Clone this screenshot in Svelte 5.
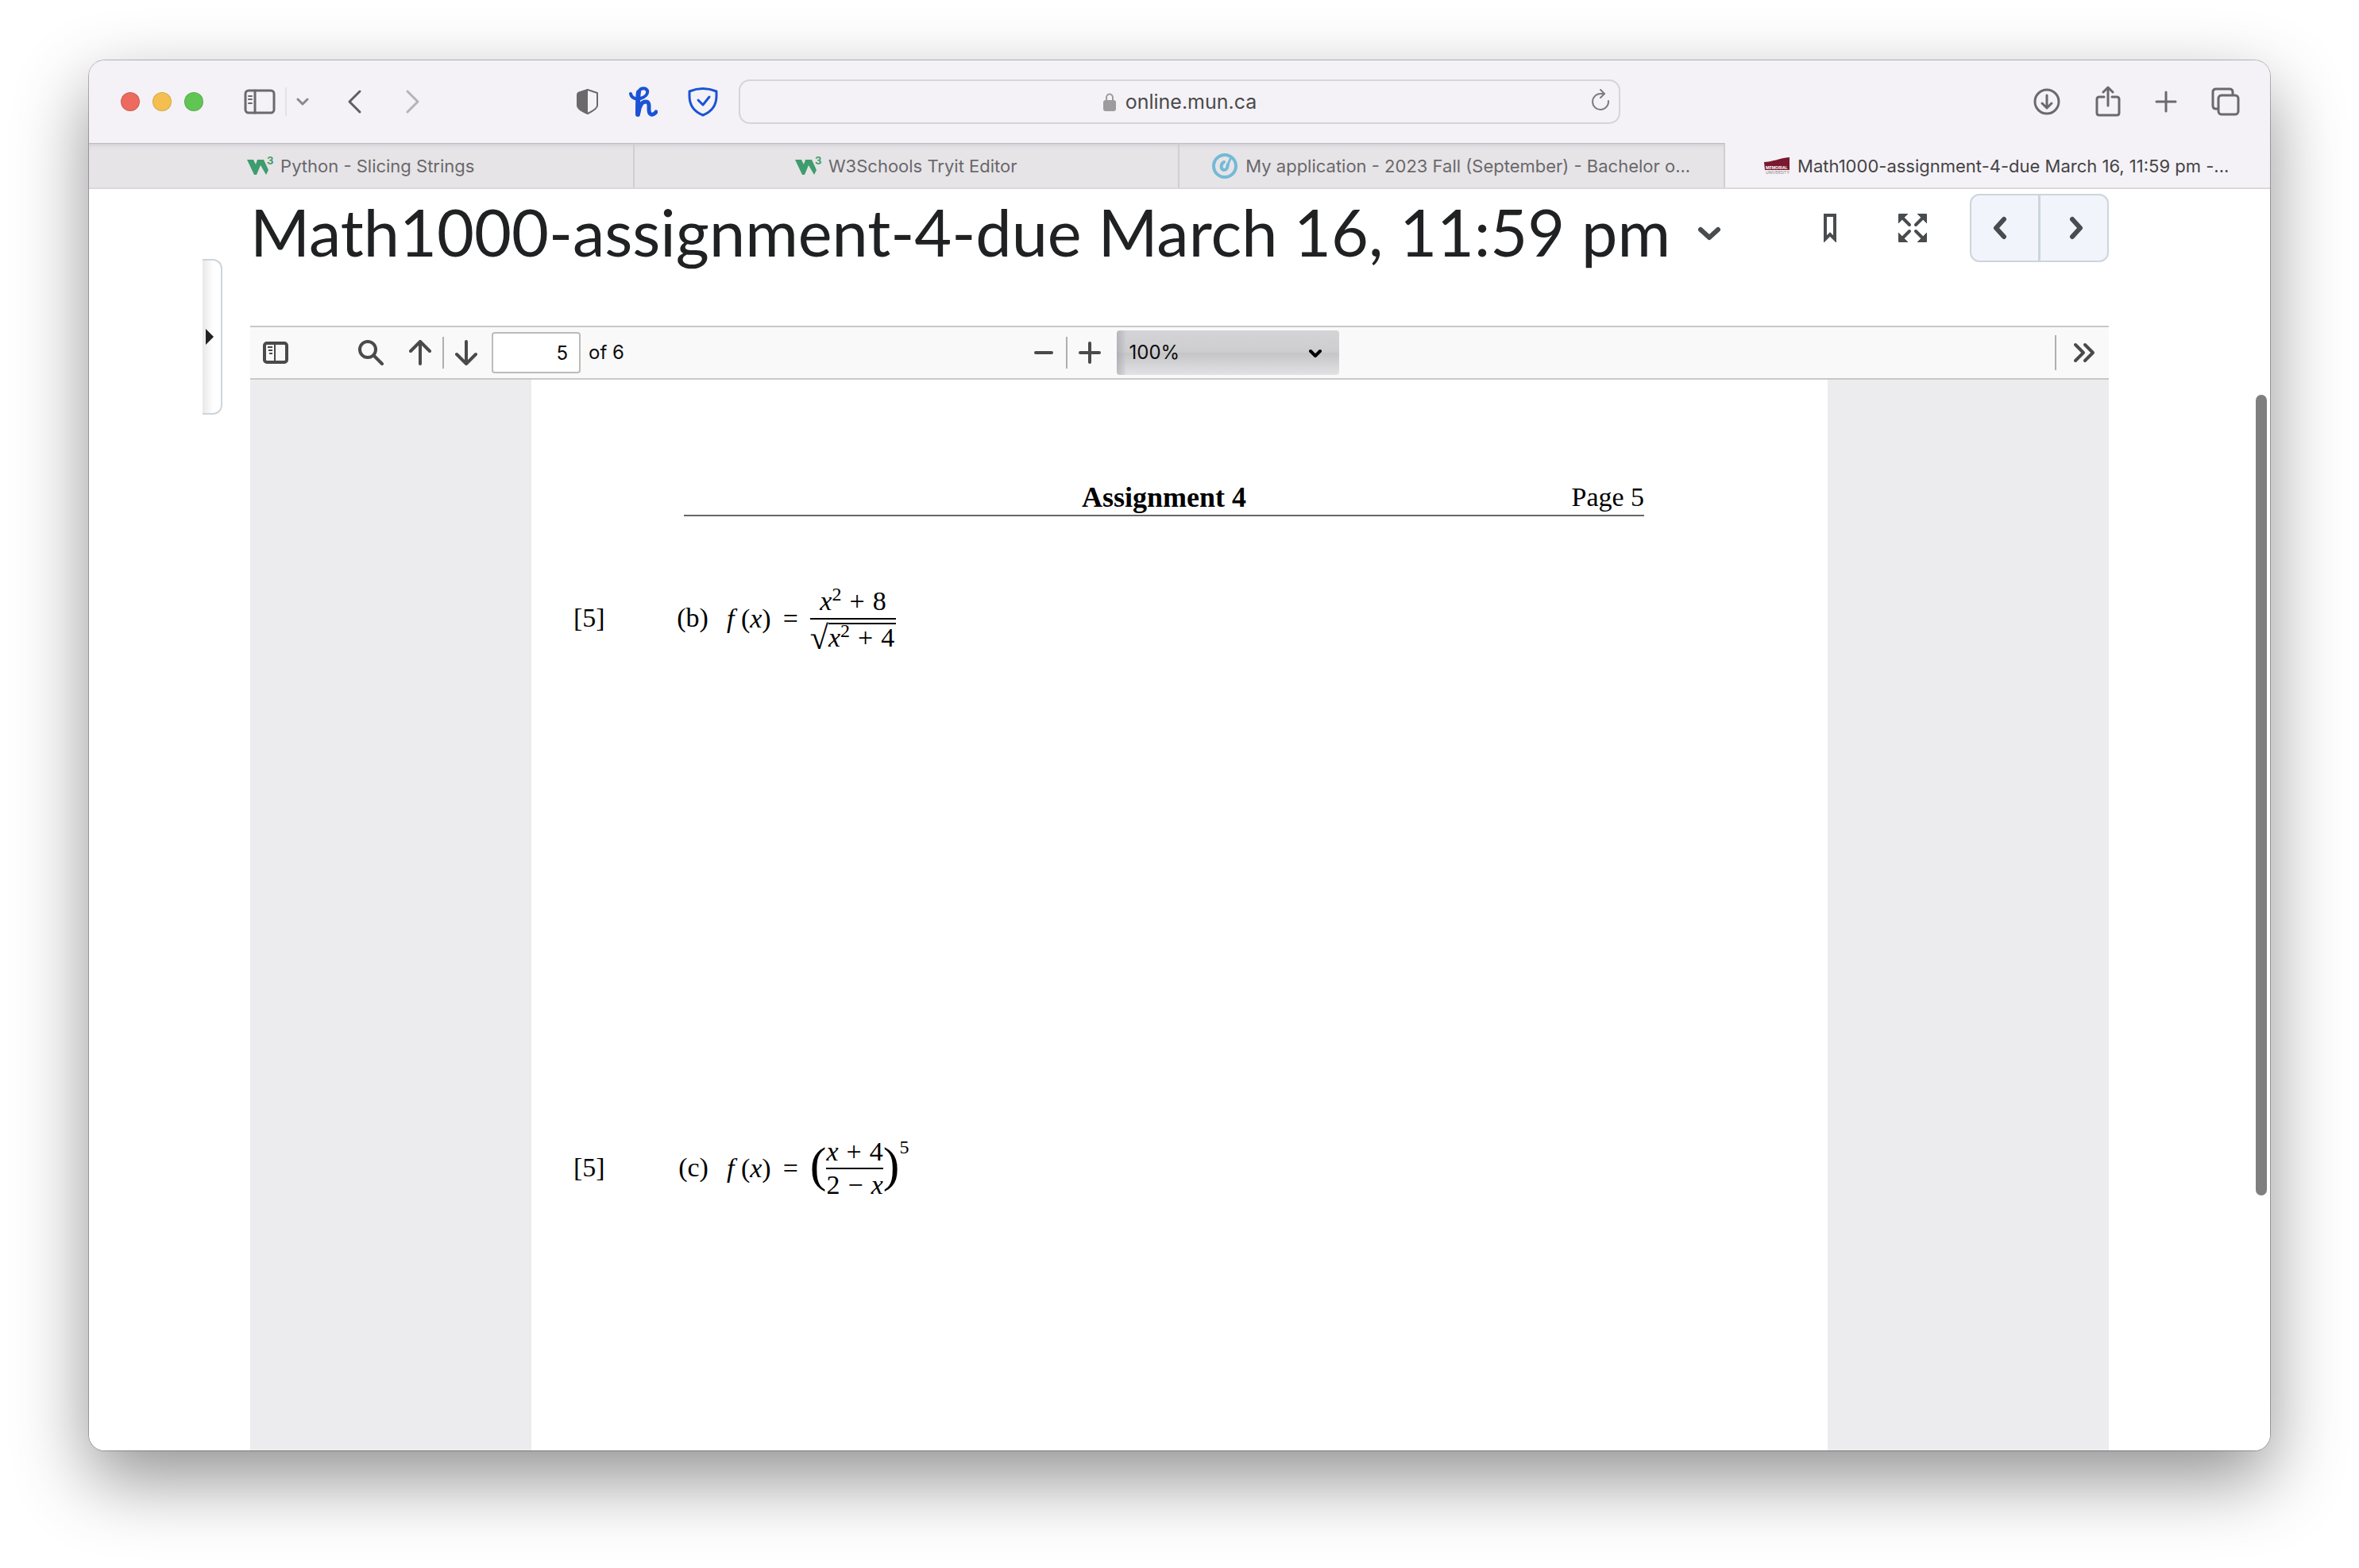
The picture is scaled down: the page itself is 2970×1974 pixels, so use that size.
<script>
	let pageNumber = $state('5');
	let zoom = $state('100%');
	let activeTab = $state(3);

	const pageCount = 6;
	const zoomLevels = ['50%', '75%', '100%', '125%', '150%', '200%'];

	const tabs = [
		{ icon: 'w3', title: 'Python - Slicing Strings' },
		{ icon: 'w3', title: 'W3Schools Tryit Editor' },
		{ icon: 'apply', title: 'My application - 2023 Fall (September) - Bachelor o...' },
		{ icon: 'mun', title: 'Math1000-assignment-4-due March 16, 11:59 pm -...' }
	];
</script>

{#snippet favicon(name)}
	{#if name === 'w3'}
		<svg class="favicon" width="32" height="24" viewBox="0 0 32 24" aria-hidden="true">
			<path d="M0 4H8L11 10L13 4H21L27 17L24 23L17 11L12 23H9Z" fill="#3f9c6e" />
			<text x="25" y="10" font-size="13" font-weight="700" fill="#3f9c6e">3</text>
		</svg>
	{:else if name === 'apply'}
		<svg class="favicon" width="32" height="32" viewBox="0 0 32 32" fill="none" stroke="#73bad6" stroke-linecap="round" aria-hidden="true">
			<circle cx="16" cy="16" r="14" stroke-width="4" />
			<path d="M15 11C11 13 10 20 15 21C19 21 19 18 20 14" stroke-width="4" />
			<path d="M20 14L23 7" stroke-width="3" />
		</svg>
	{:else}
		<svg class="favicon" width="32" height="22" viewBox="0 0 32 22" aria-hidden="true">
			<path d="M0 6C10 6 20 1 32 0V16H1Z" fill="#7a1930" />
			<text x="2" y="15" font-size="5" font-weight="700" fill="#fff">MEMORIAL</text>
			<text x="2" y="21" font-size="5" fill="#8b8589">UNIVERSITY</text>
		</svg>
	{/if}
{/snippet}

<div class="desktop">
	<div class="window">
		<header class="chrome">
			<div class="chrome-left">
				<div class="lights">
					<button class="light light--close" aria-label="Close"></button>
					<button class="light light--min" aria-label="Minimize"></button>
					<button class="light light--max" aria-label="Zoom"></button>
				</div>
				<div class="sidebar-group">
					<button class="icon-btn" aria-label="Show sidebar">
						<svg width="40" height="32" viewBox="0 0 40 32" fill="none" stroke="#6b696c" stroke-width="3" stroke-linecap="round">
							<rect x="2" y="2" width="36" height="28" rx="4" />
							<path d="M14 2V30" />
							<path d="M6 9H10M6 13H10M6 18H10" stroke-width="2" />
						</svg>
					</button>
					<span class="thin-line"></span>
					<button class="icon-btn" aria-label="Sidebar menu">
						<svg width="16" height="12" viewBox="0 0 16 12" fill="none" stroke="#8b898e" stroke-width="3" stroke-linecap="round" stroke-linejoin="round">
							<path d="M2 3L8 9L14 3" />
						</svg>
					</button>
				</div>
				<div class="history">
					<button class="icon-btn" aria-label="Back">
						<svg width="20" height="32" viewBox="0 0 20 32" fill="none" stroke="#605e61" stroke-width="3" stroke-linecap="round" stroke-linejoin="round">
							<path d="M16 3L3 16L16 29" />
						</svg>
					</button>
					<button class="icon-btn" aria-label="Forward">
						<svg width="20" height="32" viewBox="0 0 20 32" fill="none" stroke="#b5b3b7" stroke-width="3" stroke-linecap="round" stroke-linejoin="round">
							<path d="M4 3L17 16L4 29" />
						</svg>
					</button>
				</div>
				<div class="extensions">
					<button class="icon-btn" aria-label="Privacy report">
						<svg width="28" height="34" viewBox="0 0 28 34">
							<path d="M14 2L26 6V22C26 26 18 30 14 32C10 30 2 26 2 22V6Z" fill="none" stroke="#6b696c" stroke-width="2" stroke-linejoin="round" />
							<path d="M14 1L2 5Q0 6 0 8V22C0 27 9 31 14 33Z" fill="#6b696c" />
						</svg>
					</button>
					<button class="icon-btn" aria-label="Coupons">
						<svg width="36" height="40" viewBox="0 0 36 40" fill="none" stroke="#1a53d6" stroke-linecap="round" stroke-linejoin="round">
							<path d="M2 10C3 16 9 17 14 16C21 14 24 10 23 6C21 2 14 2 12 8" stroke-width="4" />
							<path d="M12 8C11 12 11 24 11 36" stroke-width="6" />
							<path d="M12 34C13 26 16 20 21 20C26 20 25 26 25 30C25 37 30 38 34 33" stroke-width="5" />
						</svg>
					</button>
					<button class="icon-btn" aria-label="Web protection">
						<svg width="38" height="38" viewBox="0 0 38 38" fill="none" stroke="#1a53d6" stroke-width="3" stroke-linecap="round" stroke-linejoin="round">
							<path d="M2 6Q19 -1 36 6V12C36 24 29 32 19 36C9 32 2 24 2 12Z" />
							<path d="M13 17L19 23L27 13" />
						</svg>
					</button>
				</div>
			</div>

			<div class="address">
				<a class="address-link" href="https://online.mun.ca">
					<svg width="18" height="24" viewBox="0 0 18 24" aria-hidden="true">
						<path d="M5 12V7C5 1 13 1 13 7V12" fill="none" stroke="#9d9b9e" stroke-width="2" />
						<rect x="1" y="10" width="16" height="14" rx="3" fill="#9d9b9e" />
					</svg>
					<span>online.mun.ca</span>
				</a>
				<button class="icon-btn reload" aria-label="Reload">
					<svg width="24" height="28" viewBox="0 0 24 28" fill="none" stroke="#7f7d80" stroke-width="2" stroke-linecap="round" stroke-linejoin="round">
						<path d="M22 15A10 10 0 1 1 12 6H17" />
						<path d="M12 1L17 6L12 11" />
					</svg>
				</button>
			</div>

			<div class="chrome-right">
				<button class="icon-btn" aria-label="Downloads">
					<svg width="36" height="36" viewBox="0 0 36 36" fill="none" stroke="#6b696c" stroke-width="3" stroke-linecap="round" stroke-linejoin="round">
						<circle cx="18" cy="18" r="15" />
						<path d="M18 10V25M12 20L18 26L24 20" />
					</svg>
				</button>
				<button class="icon-btn" aria-label="Share">
					<svg width="32" height="40" viewBox="0 0 32 40" fill="none" stroke="#6b696c" stroke-width="3" stroke-linecap="round" stroke-linejoin="round">
						<path d="M11 14H5Q2 14 2 17V34Q2 37 5 37H27Q30 37 30 34V17Q30 14 27 14H21" />
						<path d="M16 25V3M10 8L16 2L22 8" />
					</svg>
				</button>
				<button class="icon-btn" aria-label="New tab">
					<svg width="28" height="28" viewBox="0 0 28 28" stroke="#6b696c" stroke-width="3" stroke-linecap="round">
						<path d="M14 2V26M2 14H26" />
					</svg>
				</button>
				<button class="icon-btn" aria-label="Tab overview">
					<svg width="36" height="36" viewBox="0 0 36 36" fill="none" stroke="#6b696c" stroke-width="3" stroke-linejoin="round">
						<path d="M9 27H6Q2 27 2 23V6Q2 2 6 2H23Q27 2 27 6V9" />
						<rect x="9" y="10" width="25" height="24" rx="4" />
					</svg>
				</button>
			</div>
		</header>

		<nav class="tabs">
			{#each tabs as tab, i}
				<button class="tab" class:tab--active={activeTab === i} onclick={() => (activeTab = i)}>
					{@render favicon(tab.icon)}
					<span>{tab.title}</span>
				</button>
			{/each}
		</nav>

		<main>
			<button class="drawer" aria-label="Open side panel">
				<svg width="10" height="20" viewBox="0 0 10 20"><path d="M0 0L10 10L0 20Z" fill="#202122" /></svg>
			</button>

			<div class="topic">
				<h1>Math1000-assignment-4-due March 16, 11:59 pm</h1>
				<button class="icon-btn topic-menu" aria-label="Topic actions">
					<svg width="32" height="20" viewBox="0 0 32 20" fill="none" stroke="#494c4e" stroke-width="6" stroke-linecap="round" stroke-linejoin="round">
						<path d="M5 5L16 15L27 5" />
					</svg>
				</button>
				<div class="topic-tools">
					<button class="icon-btn" aria-label="Bookmark">
						<svg width="16" height="36" viewBox="0 0 16 36" fill="none" stroke="#494c4e" stroke-width="4">
							<path d="M2 32V2H14V32L8 26Z" />
						</svg>
					</button>
					<button class="icon-btn" aria-label="Full screen">
						<svg width="36" height="36" viewBox="0 0 36 36" fill="#494c4e" stroke="#494c4e" stroke-linecap="round">
							<path d="M5 5L14 14M31 5L22 14M5 31L14 22M31 31L22 22" stroke-width="4" />
							<path d="M2 0H12L0 12V2Q0 0 2 0ZM34 0H24L36 12V2Q36 0 34 0ZM2 36H12L0 24V34Q0 36 2 36ZM34 36H24L36 24V34Q36 36 34 36Z" stroke-width="1" />
						</svg>
					</button>
					<div class="pager">
						<button aria-label="Previous">
							<svg width="18" height="30" viewBox="0 0 18 30" fill="none" stroke="#494c4e" stroke-width="6" stroke-linecap="round" stroke-linejoin="round">
								<path d="M14 4L4 15L14 26" />
							</svg>
						</button>
						<button aria-label="Next">
							<svg width="18" height="30" viewBox="0 0 18 30" fill="none" stroke="#494c4e" stroke-width="6" stroke-linecap="round" stroke-linejoin="round">
								<path d="M4 4L14 15L4 26" />
							</svg>
						</button>
					</div>
				</div>
			</div>

			<section class="viewer">
				<div class="pdf-bar">
					<div class="bar-left">
						<button class="pdf-btn" aria-label="Toggle sidebar">
							<svg width="32" height="28" viewBox="0 0 32 28" fill="none" stroke="#4a4a4b">
								<rect x="2" y="2" width="28" height="24" rx="3" stroke-width="4" />
								<path d="M15 3V25" stroke-width="2" />
								<path d="M6 7H12M7 11H12M8 15H12" stroke-width="2" />
							</svg>
						</button>
						<button class="pdf-btn search" aria-label="Find">
							<svg width="32" height="32" viewBox="0 0 32 32" fill="none" stroke="#4a4a4b" stroke-width="4" stroke-linecap="round">
								<circle cx="12" cy="12" r="10" />
								<path d="M20 20L30 30" />
							</svg>
						</button>
						<button class="pdf-btn" aria-label="Previous page">
							<svg width="28" height="32" viewBox="0 0 28 32" fill="none" stroke="#4a4a4b" stroke-width="4" stroke-linecap="round" stroke-linejoin="round">
								<path d="M14 30V2M2 14L14 2L26 14" />
							</svg>
						</button>
						<span class="sep"></span>
						<button class="pdf-btn" aria-label="Next page">
							<svg width="28" height="32" viewBox="0 0 28 32" fill="none" stroke="#4a4a4b" stroke-width="4" stroke-linecap="round" stroke-linejoin="round">
								<path d="M14 2V30M2 18L14 30L26 18" />
							</svg>
						</button>
						<input id="page-number" class="page-input" type="text" inputmode="numeric" aria-label="Page" bind:value={pageNumber} />
						<label for="page-number">of {pageCount}</label>
					</div>
					<div class="bar-center">
						<button class="pdf-btn" aria-label="Zoom out">
							<svg width="28" height="28" viewBox="0 0 28 28" stroke="#4a4a4b" stroke-width="4" stroke-linecap="round">
								<path d="M4 14H24" />
							</svg>
						</button>
						<span class="sep"></span>
						<button class="pdf-btn" aria-label="Zoom in">
							<svg width="28" height="28" viewBox="0 0 28 28" stroke="#4a4a4b" stroke-width="4" stroke-linecap="round">
								<path d="M2 14H26M14 2V26" />
							</svg>
						</button>
						<div class="zoom">
							<select aria-label="Zoom" bind:value={zoom}>
								{#each zoomLevels as level}
									<option>{level}</option>
								{/each}
							</select>
							<svg class="zoom-arrow" width="16" height="12" viewBox="0 0 16 12" fill="none" stroke="#000" stroke-width="4" stroke-linecap="round" stroke-linejoin="round" aria-hidden="true">
								<path d="M2 3L8 9L14 3" />
							</svg>
						</div>
					</div>
					<div class="bar-right">
						<span class="sep sep--tall"></span>
						<button class="pdf-btn" aria-label="Tools">
							<svg width="28" height="28" viewBox="0 0 28 28" fill="none" stroke="#4a4a4b" stroke-width="4" stroke-linecap="round" stroke-linejoin="round">
								<path d="M3 4L13 14L3 24M15 4L25 14L15 24" />
							</svg>
						</button>
					</div>
				</div>

				<div class="canvas">
					<article class="paper">
						<div class="paper-head">
							<strong>Assignment 4</strong>
							<span>Page 5</span>
						</div>

						<div class="question">
							<div class="labels"><span>[5]</span><span>(b)</span></div>
							<div class="formula">
								<span><i>f</i> (<i>x</i>)</span>
								<span>=</span>
								<span class="frac">
									<span class="frac-part"><span><i>x</i><sup>2</sup></span><span>+</span><span>8</span></span>
									<span class="frac-part frac-part--low root">
										<span class="radical">√</span>
										<span class="radicand"><span><i>x</i><sup>2</sup></span><span>+</span><span>4</span></span>
									</span>
								</span>
							</div>
						</div>

						<div class="question">
							<div class="labels"><span>[5]</span><span>(c)</span></div>
							<div class="formula">
								<span><i>f</i> (<i>x</i>)</span>
								<span>=</span>
								<span class="power">
									<span class="paren">(</span>
									<span class="frac frac--tight">
										<span class="frac-part"><i>x</i><span>+</span><span>4</span></span>
										<span class="frac-part frac-part--low"><span>2</span><span>−</span><i>x</i></span>
									</span>
									<span class="paren">)</span>
									<span class="exponent">5</span>
								</span>
							</div>
						</div>
					</article>
				</div>
			</section>

			<div class="scrollbar"></div>
		</main>
	</div>
</div>

<style>
	:global(body) { background: #fff; }

	.desktop { box-sizing: border-box; min-height: 100vh; padding: 76px 112px 148px; display: flex; font-family: Inter, "Liberation Sans", sans-serif; overflow: hidden; }
	.window { flex: 1; min-width: 0; display: flex; flex-direction: column; border-radius: 20px; background: #fff; overflow: hidden; box-shadow: 0 0 0 1px rgba(0,0,0,0.26), 0 36px 92px rgba(0,0,0,0.43); }

	button { font: inherit; color: inherit; margin: 0; padding: 0; border: none; background: none; cursor: pointer; }
	svg { display: block; flex: none; }
	.icon-btn { display: flex; align-items: center; justify-content: center; }

	.chrome { display: grid; grid-template-columns: 1fr 40.4% 1fr; align-items: center; height: 104px; background: #f4f2f6; }
	.chrome-left { display: flex; align-items: center; padding: 0 26px 0 40px; }
	.lights { display: flex; gap: 16px; margin-right: 51px; }
	.light { width: 24px; height: 24px; border-radius: 50%; border: 1px solid rgba(0,0,0,0.12); }
	.light--close { background: #ec6a5e; }
	.light--min { background: #f4bf4f; }
	.light--max { background: #61c554; }
	.sidebar-group { display: flex; align-items: center; gap: 12px; margin-right: 48px; }
	.thin-line { width: 2px; height: 36px; background: #e4e2e6; }
	.history { display: flex; gap: 52px; }
	.extensions { display: flex; align-items: center; gap: 38px; margin-left: auto; }

	.address { box-sizing: border-box; position: relative; display: flex; align-items: center; justify-content: center; height: 56px; border: 2px solid #d6d4d8; border-radius: 14px; }
	.address-link { display: flex; align-items: center; gap: 11px; color: #4b494c; font-size: 25px; line-height: 32px; text-decoration: none; }
	.reload { position: absolute; right: 11px; top: 10px; }

	.chrome-right { display: flex; align-items: center; justify-content: flex-end; gap: 43px; padding-right: 38px; }

	.tabs { display: grid; grid-template-columns: repeat(4, 1fr); height: 56px; border-bottom: 2px solid #dad8db; background: #f4f2f6; }
	.tab { min-width: 0; display: flex; align-items: center; justify-content: center; gap: 10px; padding: 0 24px; font-size: 22px; line-height: 28px; color: #6a686b; background: linear-gradient(#d3d1d5, #e2e0e4 4px, #e6e4e7 8px); border-top: 1px solid #bfbdc1; border-right: 2px solid #d0ced2; }
	.tab span { white-space: nowrap; overflow: hidden; text-overflow: ellipsis; }
	.tab--active { background: #f4f2f6; border-color: transparent; color: #454346; }
	.favicon { overflow: visible; }

	main { position: relative; flex: 1; display: flex; flex-direction: column; padding: 0 203px; background: #fff; }

	.drawer { position: absolute; left: 143px; top: 88px; box-sizing: border-box; width: 25px; height: 196px; padding-left: 4px; border: 2px solid #cdd5dc; border-left: none; border-radius: 0 12px 12px 0; background: linear-gradient(90deg, #e8e8e8, #fff 14px); display: flex; align-items: center; }

	.topic { display: flex; align-items: flex-start; height: 172px; }
	h1 { margin: 2px 0 0; font-family: Lato, "Liberation Sans", sans-serif; font-size: 81px; line-height: 104px; font-weight: 400; color: #202122; white-space: nowrap; }
	.topic-menu { margin: 46px 0 0 33px; }
	.topic-tools { display: flex; align-items: center; margin: 6px 0 0 auto; }
	.topic-tools .icon-btn + .icon-btn { margin-left: 78px; }
	.pager { display: flex; margin-left: 54px; border: 2px solid #cdd5dc; border-radius: 12px; background: #f1f5fb; overflow: hidden; }
	.pager button { box-sizing: border-box; width: 84px; height: 82px; padding-right: 12px; display: flex; align-items: center; justify-content: center; }
	.pager button + button { width: 87px; padding: 0 0 0 6px; border-left: 3px solid #cdd5dc; }

	.viewer { flex: 1; display: flex; flex-direction: column; }
	.pdf-bar { display: grid; grid-template-columns: 1fr auto 1fr; align-items: center; height: 64px; padding: 0 3px 0 4px; background: #f9f9fa; border-top: 2px solid #c8c8c8; border-bottom: 2px solid #c8c8c8; font-size: 24px; line-height: 30px; color: #0c0c0d; }
	.bar-left, .bar-center, .bar-right { display: flex; align-items: center; }
	.bar-right { justify-content: flex-end; }
	.pdf-btn { width: 56px; height: 56px; display: flex; align-items: center; justify-content: center; }
	.search { margin: 0 6px 0 64px; }
	.sep { width: 2px; height: 40px; background: #b0b0b1; }
	.sep--tall { height: 44px; margin-right: 7px; }
	.page-input { box-sizing: border-box; width: 112px; height: 52px; margin: 0 10px 0 4px; padding: 0 14px; border: 2px solid #bbbbbc; border-radius: 4px; background: #fff; font: inherit; color: inherit; text-align: right; }
	.zoom { position: relative; margin-left: 6px; }
	select { appearance: none; display: block; width: 280px; height: 56px; padding: 0 48px 0 16px; border: none; border-radius: 4px; background: linear-gradient(90deg, rgba(150,150,158,0.5), rgba(190,190,196,0.3) 10px, transparent 12px), linear-gradient(#d4d4d6, #cdcdcf 50%, #c5c5c7 51%, #e2e2e4); font: inherit; color: inherit; }
	.zoom-arrow { position: absolute; right: 22px; top: 23px; pointer-events: none; }

	.canvas { flex: 1; display: flex; justify-content: center; background: #ececee; }
	.paper { box-sizing: border-box; width: 69.75%; padding: 128px 0 0; background: #fff; font-family: "Liberation Serif", serif; font-size: 34px; line-height: 40px; color: #000; }
	.paper-head { display: grid; grid-template-columns: 1fr auto 1fr; margin: 0 231px 79px 192px; padding-bottom: 2px; border-bottom: 2px solid #666; }
	.paper-head strong { grid-column: 2; font-size: 36px; }
	.paper-head span { text-align: right; }

	.question { display: flex; align-items: flex-start; height: 692px; padding-left: 53px; }
	.question:last-child { height: auto; }
	.labels { display: flex; justify-content: space-between; width: 170px; margin-right: 23px; line-height: 98px; }
	.formula { display: flex; align-items: center; gap: 15px; height: 100px; }
	.frac { display: grid; grid-template-rows: 1fr 1fr; }
	.frac-part { display: flex; align-items: flex-end; justify-content: center; gap: 10px; height: 42px; padding: 0 12px 1px; border-bottom: 1px solid #000; box-sizing: border-box; }
	.frac-part--low { align-items: flex-start; border-bottom: none; border-top: 1px solid #000; }
	.frac--tight .frac-part { padding: 0; }
	sup { font-size: 24px; line-height: 0; vertical-align: 12px; }
	.root { gap: 0; padding: 4px 0 0; }
	.radical { font-size: 42px; line-height: 38px; }
	.radicand { display: flex; gap: 10px; padding-right: 2px; border-top: 2px solid #000; line-height: 34px; }
	.power { display: flex; align-items: center; }
	.paren { padding-bottom: 10px; font-size: 62px; line-height: 74px; }
	.exponent { align-self: flex-start; font-size: 24px; line-height: 30px; }

	.scrollbar { position: absolute; right: 4px; top: 16.3%; width: 14px; height: 63.5%; border-radius: 7px; background: #7f7f7f; }
</style>
